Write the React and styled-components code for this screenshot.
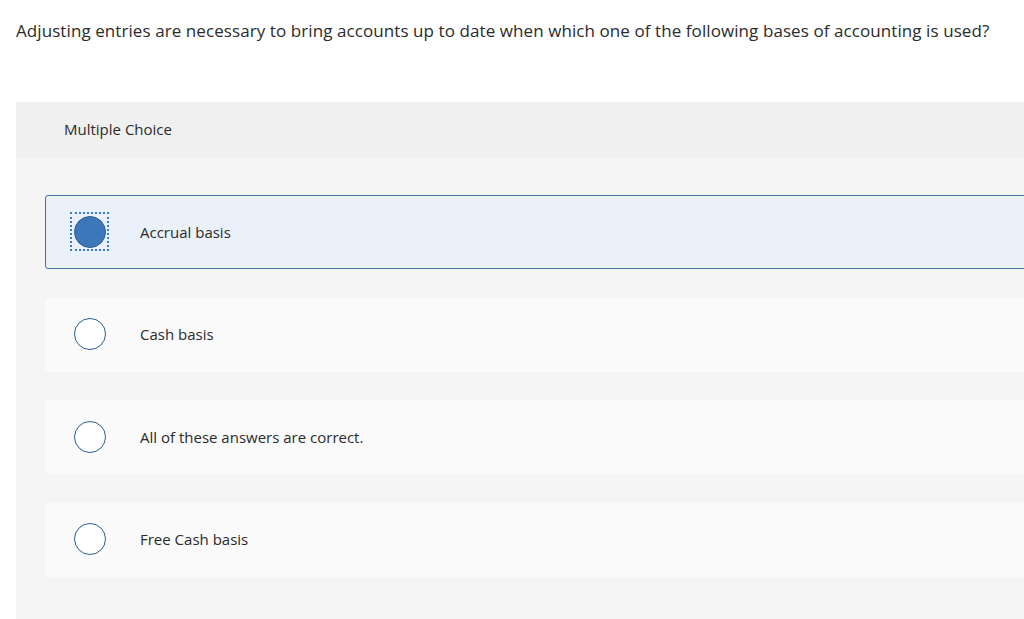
import React from "react";
import styled, { createGlobalStyle } from "styled-components";

const Global = createGlobalStyle`
  html, body { margin: 0; padding: 0; background: #fff; }
  body { font-family: "Open Sans", "Liberation Sans", sans-serif; color: #2b2b2b; overflow: hidden; }
`;

const Page = styled.div`
  width: 1024px;
  height: 619px;
  overflow: hidden;
  padding: 20px 0 0 16px;
  box-sizing: border-box;
`;

const Question = styled.p`
  margin: 0;
  font-size: 17px;
  line-height: 22px;
  letter-spacing: 0.08px;
  color: #2b2b2b;
  white-space: nowrap;
`;

const Panel = styled.section`
  margin-top: 60px;
  margin-right: -40px;
  background: #f5f5f5;
  height: 600px;
`;

const Header = styled.div`
  height: 56px;
  background: #f0f0f0;
  display: flex;
  align-items: center;
  padding: 0 0 2px 48px;
  box-sizing: border-box;
  font-size: 15px;
  color: #2b2b2b;
`;

const Options = styled.div`
  display: flex;
  flex-direction: column;
  gap: 28.67px;
  padding: 37px 0 0 29px;
`;

const Option = styled.label`
  display: flex;
  align-items: center;
  height: 74px;
  box-sizing: border-box;
  border-radius: 3px;
  border: 1px solid ${p => (p.$selected ? "#3f72aa" : "transparent")};
  background: ${p => (p.$selected ? "#eaf1fa" : "#fafafa")};
  padding: 0 0 1px 24px;
  font-size: 15px;
  color: #2b2b2b;
`;

const RadioWrap = styled.span`
  width: 39px;
  height: 39px;
  display: flex;
  align-items: center;
  justify-content: center;
  box-sizing: border-box;
  outline: ${p => (p.$focus ? "2px dotted #3a7bc8" : "none")};
  outline-offset: -2px;
  margin-right: 31px;
  flex-shrink: 0;
`;

const Radio = styled.span`
  width: 32px;
  height: 32px;
  border-radius: 50%;
  box-sizing: border-box;
  border: 1.5px solid #2b5f94;
  background: ${p => (p.$checked ? "#3c78b9" : "#fff")};
`;

const options = [
  { text: "Accrual basis", selected: true },
  { text: "Cash basis" },
  { text: "All of these answers are correct." },
  { text: "Free Cash basis" },
];

export default function App() {
  return (
    <Page>
      <Global />
      <Question>
        Adjusting entries are necessary to bring accounts up to date when which one of the following bases of accounting is used?
      </Question>
      <Panel>
        <Header>Multiple Choice</Header>
        <Options>
          {options.map(o => (
            <Option key={o.text} $selected={o.selected}>
              <RadioWrap $focus={o.selected}>
                <Radio $checked={o.selected} />
              </RadioWrap>
              {o.text}
            </Option>
          ))}
        </Options>
      </Panel>
    </Page>
  );
}
